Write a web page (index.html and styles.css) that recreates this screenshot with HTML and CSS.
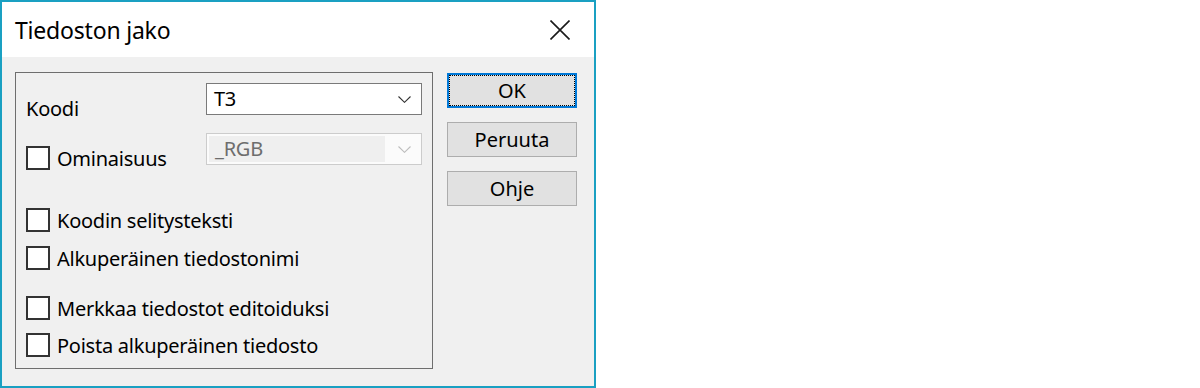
FILE: index.html
```html
<!DOCTYPE html>
<html lang="fi">

<head>
    <meta charset="UTF-8">
    <meta name="viewport" content="width=device-width, initial-scale=1.0">
    <title>Tiedoston jako</title>
    <link rel="stylesheet" href="styles.css">
</head>

<body>

    <div class="window">
        <div class="titlebar">
            <span class="title">Tiedoston jako</span>
            <span class="close">
                <svg width="20" height="20" viewBox="0 0 20 20">
                    <path d="M0.5 0.5 L19.5 19.5 M19.5 0.5 L0.5 19.5" stroke="#1a1a1a" stroke-width="1.6" fill="none" />
                </svg>
            </span>
        </div>
        <div class="content">
            <div class="group">
                <div class="row">
                    <span class="field-label koodi">Koodi</span>
                    <div class="combo">
                        <span class="combo-text">T3</span>
                        <svg class="chevron" width="13" height="7" viewBox="0 0 13 7">
                            <path d="M0.5 0.5 L6.5 6.3 L12.5 0.5" stroke="#333" stroke-width="1.1" fill="none" />
                        </svg>
                    </div>
                </div>
                <div class="row row-second">
                    <label class="check field-label">
                        <span class="box"></span>
                        <span>Ominaisuus</span>
                    </label>
                    <div class="combo disabled">
                        <span class="combo-field">_RGB</span>
                        <svg class="chevron" width="13" height="7" viewBox="0 0 13 7">
                            <path d="M0.5 0.5 L6.5 6.3 L12.5 0.5" stroke="#bdbdbd" stroke-width="1.1" fill="none" />
                        </svg>
                    </div>
                </div>

                <div class="checks first">
                    <label class="check"><span class="box"></span><span>Koodin selitysteksti</span></label>
                    <label class="check"><span class="box"></span><span>Alkuperäinen tiedostonimi</span></label>
                </div>
                <div class="checks second">
                    <label class="check"><span class="box"></span><span>Merkkaa tiedostot editoiduksi</span></label>
                    <label class="check"><span class="box"></span><span>Poista alkuperäinen tiedosto</span></label>
                </div>
            </div>

            <div class="buttons">
                <button class="btn default">OK</button>
                <button class="btn">Peruuta</button>
                <button class="btn">Ohje</button>
            </div>
        </div>
    </div>

</body>

</html>
```

FILE: styles.css
```css
body {
    margin: 0;
    background-color: #fff;
    font-family: "Noto Sans", "Open Sans", sans-serif;
    font-size: 20px;
    letter-spacing: -0.25px;
    color: #000;
}

.window {
    width: 596px;
    height: 388px;
    box-sizing: border-box;
    border: 2px solid #1aa0c2;
    display: flex;
    flex-direction: column;
}

.titlebar {
    height: 55px;
    flex-shrink: 0;
    background-color: #fff;
    display: flex;
    align-items: center;
    justify-content: space-between;
    padding: 0 24px 0 13px;
}

.title {
    font-size: 23px;
    letter-spacing: -0.2px;
    position: relative;
    top: 0px;
}

.close svg {
    display: block;
}

.content {
    flex: 1;
    background-color: #f0f0f0;
    display: flex;
    align-items: flex-start;
    padding: 15px 0 0 13px;
}

/* group box */
.group {
    width: 418px;
    height: 297px;
    box-sizing: border-box;
    border: 1px solid #6e6e6e;
    padding: 10px 10px 0 10px;
}

.row {
    display: flex;
    align-items: flex-start;
}

.row-second {
    margin-top: 18px;
}

.field-label {
    width: 180px;
    flex-shrink: 0;
}

.koodi {
    height: 32px;
    box-sizing: border-box;
    padding-top: 16px;
    line-height: 20px;
}

.row-second .check {
    margin-top: 13px;
}

.combo {
    width: 216px;
    height: 32px;
    box-sizing: border-box;
    border: 1px solid #7a7a7a;
    background-color: #fff;
    display: flex;
    align-items: center;
    justify-content: space-between;
    padding: 0 10px 0 7px;
}

.combo-text {
    line-height: 30px;
}

.combo.disabled {
    border-color: #cccccc;
    background-color: #fbfbfb;
    padding: 2px 10px 2px 2px;
    align-items: stretch;
}

.combo-field {
    width: 176px;
    background-color: #efefef;
    color: #6d6d6d;
    padding-left: 6px;
    line-height: 26px;
    box-sizing: border-box;
}

.combo.disabled .chevron {
    align-self: center;
}

/* checkboxes */
.check {
    display: flex;
    align-items: center;
    gap: 7px;
    height: 24px;
}

.box {
    width: 24px;
    height: 24px;
    box-sizing: border-box;
    border: 2px solid #333;
    background-color: #fff;
    flex-shrink: 0;
}

.checks {
    display: flex;
    flex-direction: column;
    gap: 14px;
}

.checks.first {
    margin-top: 38px;
}

.checks.second {
    margin-top: 26px;
    gap: 13px;
}

/* buttons */
.buttons {
    display: flex;
    flex-direction: column;
    gap: 14px;
    margin: 1px 0 0 14px;
}

.btn {
    width: 130px;
    height: 35px;
    box-sizing: border-box;
    border: 1px solid #adadad;
    background-color: #e1e1e1;
    font-family: "Noto Sans", "Open Sans", sans-serif;
    font-size: 20px;
    color: #000;
    padding: 0;
    line-height: 30px;
}

.btn.default {
    border: 2px solid #0078d7;
    outline: 1px dotted #000;
    outline-offset: -3px;
}
```
